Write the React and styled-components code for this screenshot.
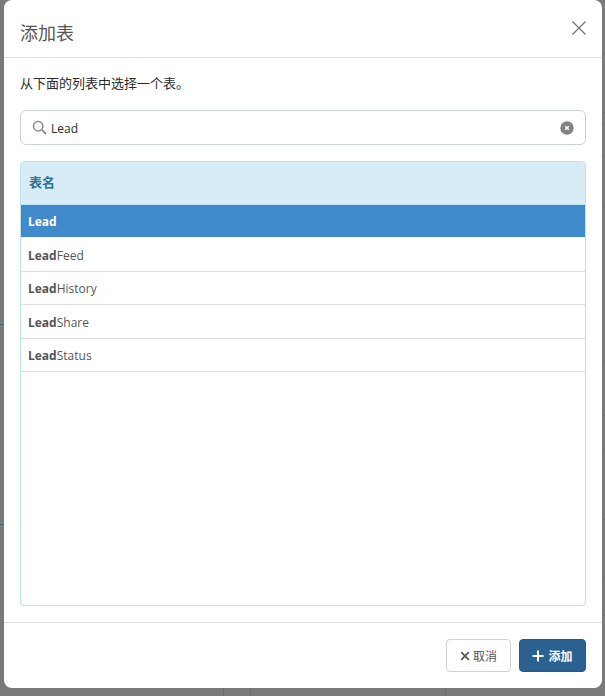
import React, { useState } from 'react'
import styled, { createGlobalStyle } from 'styled-components'

const GlobalStyle = createGlobalStyle`
  html, body {
    margin: 0;
    padding: 0;
    height: 100%;
    overflow: hidden;
  }
  body {
    font-family: "Open Sans", "Noto Sans CJK SC", sans-serif;
    color: #4a4a4a;
  }
  * {
    box-sizing: border-box;
  }
`

// faint lines of the page behind the overlay
const leftLine = (y) => `linear-gradient(#4d6478, #4d6478) 0 ${y}px / 4px 1px no-repeat`
const rightLine = (y) => `linear-gradient(#6c6c6c, #6c6c6c) 100% ${y}px / 4px 1px no-repeat`
const vLine = (x, color) => `linear-gradient(${color}, ${color}) ${x}px 0 / 1px 100% no-repeat`

const backdropLines = [
  leftLine(324),
  leftLine(524),
  ...[53, 112, 123, 156, 206, 361, 415, 449, 519, 577, 615].map(rightLine),
  vLine(223, '#686868'),
  vLine(250, '#6c6c6c'),
  vLine(445, '#6c6c6c'),
].join(', ')

const Backdrop = styled.div`
  width: 605px;
  height: 696px;
  padding: 0 3px 8px 4px;
  display: flex;
  background: ${backdropLines}, #7a7a7a;
`

const Modal = styled.div`
  flex: 1;
  display: flex;
  flex-direction: column;
  background: #fff;
  border-radius: 8px;
`

const Header = styled.div`
  height: 58px;
  padding: 0 15px 0 16px;
  display: flex;
  align-items: center;
  justify-content: space-between;
  border-bottom: 1px solid #dfe1e6;
`

const Title = styled.h2`
  margin: 0;
  font-size: 18px;
  line-height: 24px;
  font-weight: 400;
  color: #555;
  padding-top: 9px;
`

const CloseButton = styled.button`
  padding: 0;
  margin-bottom: 1px;
  border: none;
  background: none;
  display: flex;
  cursor: pointer;
`

const Body = styled.div`
  flex: 1;
  min-height: 0;
  padding: 16px 16px 16px;
  display: flex;
  flex-direction: column;
`

const Hint = styled.p`
  margin: 0 0 17px;
  font-size: 13px;
  line-height: 19px;
  color: #2b2b2b;
`

const SearchBox = styled.div`
  height: 35px;
  margin-bottom: 16px;
  padding: 0 11px 0 11px;
  display: flex;
  align-items: center;
  gap: 4px;
  border: 1px solid #ccd0d9;
  border-radius: 6px;
`

const SearchInput = styled.input`
  flex: 1;
  min-width: 0;
  padding: 2px 0 0;
  border: none;
  outline: none;
  font: inherit;
  font-size: 12px;
  color: #2b2b2b;
`

const ClearButton = styled.button`
  padding: 0;
  border: none;
  background: none;
  display: flex;
  cursor: pointer;
`

const TablePanel = styled.div`
  flex: 1;
  min-height: 0;
  border: 1px solid #b9e3ee;
  border-radius: 4px;
  overflow: hidden;
`

const TableHead = styled.div`
  height: 43px;
  padding: 0 8px 4px;
  display: flex;
  align-items: center;
  background: #d8ecf5;
  border-bottom: 1px solid #b9e3ee;
  font-size: 13px;
  font-weight: 700;
  color: #2e7296;
`

const Row = styled.div`
  padding: ${(p) => (p.$selected ? '0 7px' : '1.5px 7px 0')};
  display: flex;
  align-items: center;
  height: ${(p) => (p.$selected ? '32px' : '33.5px')};
  margin-bottom: ${(p) => (p.$selected ? '1px' : '0')};
  font-size: 12px;
  color: ${(p) => (p.$selected ? '#fff' : '#555')};
  background: ${(p) => (p.$selected ? '#408acb' : '#fff')};
  border-bottom: ${(p) => (p.$selected ? 'none' : '1px solid #dedede')};
`

const Match = styled.strong`
  font-weight: 700;
`

const Footer = styled.div`
  height: 66px;
  padding: 0 16px 0 0;
  display: flex;
  align-items: center;
  justify-content: flex-end;
  gap: 8px;
  border-top: 1px solid #dfe1e6;
`

const Button = styled.button`
  height: 33px;
  width: ${(p) => (p.$primary ? '67px' : '65px')};
  padding: 0;
  display: flex;
  align-items: center;
  justify-content: center;
  gap: ${(p) => (p.$primary ? '4px' : '3px')};
  border: 1px solid ${(p) => (p.$primary ? '#265b85' : '#ccd0d9')};
  border-radius: 4px;
  background: ${(p) => (p.$primary ? '#2a6190' : '#fff')};
  color: ${(p) => (p.$primary ? '#fff' : '#555')};
  font: inherit;
  font-size: 12px;
  font-weight: ${(p) => (p.$primary ? 700 : 400)};
  cursor: pointer;
`

const tables = ['Lead', 'LeadFeed', 'LeadHistory', 'LeadShare', 'LeadStatus']

const App = () => {
  const [search, setSearch] = useState('Lead')
  const [selected, setSelected] = useState('Lead')

  const filtered = tables.filter((name) =>
    name.toLowerCase().includes(search.toLowerCase())
  )

  return (
    <Backdrop>
      <GlobalStyle />
      <Modal>
        <Header>
          <Title>添加表</Title>
          <CloseButton aria-label="关闭">
            <svg width="16" height="16" viewBox="0 0 16 16" fill="none" stroke="#777" strokeWidth="1.3">
              <path d="M1.5 1.5l13 13M14.5 1.5l-13 13" />
            </svg>
          </CloseButton>
        </Header>
        <Body>
          <Hint>从下面的列表中选择一个表。</Hint>
          <SearchBox>
            <svg width="15" height="15" viewBox="0 0 15 15" fill="none" stroke="#8a8a8a" strokeWidth="1.5">
              <circle cx="6.2" cy="6.2" r="4.7" />
              <path d="M9.7 9.7l4.3 4.3" strokeWidth="1.8" />
            </svg>
            <SearchInput value={search} onChange={(e) => setSearch(e.target.value)} />
            <ClearButton aria-label="清除" onClick={() => setSearch('')}>
              <svg width="14" height="14" viewBox="0 0 14 14">
                <circle cx="7" cy="7" r="6.7" fill="#838383" />
                <path d="M5.2 5.2l3.6 3.6M8.8 5.2l-3.6 3.6" stroke="#fff" strokeWidth="1.4" />
              </svg>
            </ClearButton>
          </SearchBox>
          <TablePanel>
            <TableHead>表名</TableHead>
            {filtered.map((name) => (
              <Row key={name} $selected={name === selected} onClick={() => setSelected(name)}>
                <Match>{name.slice(0, 4)}</Match>
                {name.slice(4)}
              </Row>
            ))}
          </TablePanel>
        </Body>
        <Footer>
          <Button>
            <svg width="10" height="10" viewBox="0 0 10 10" fill="none" stroke="#555" strokeWidth="1.7">
              <path d="M1.2 1.2l7.6 7.6M8.8 1.2l-7.6 7.6" />
            </svg>
            取消
          </Button>
          <Button $primary>
            <svg width="12" height="12" viewBox="0 0 12 12" fill="none" stroke="#fff" strokeWidth="2">
              <path d="M6 .5v11M.5 6h11" />
            </svg>
            添加
          </Button>
        </Footer>
      </Modal>
    </Backdrop>
  )
}

export default App
